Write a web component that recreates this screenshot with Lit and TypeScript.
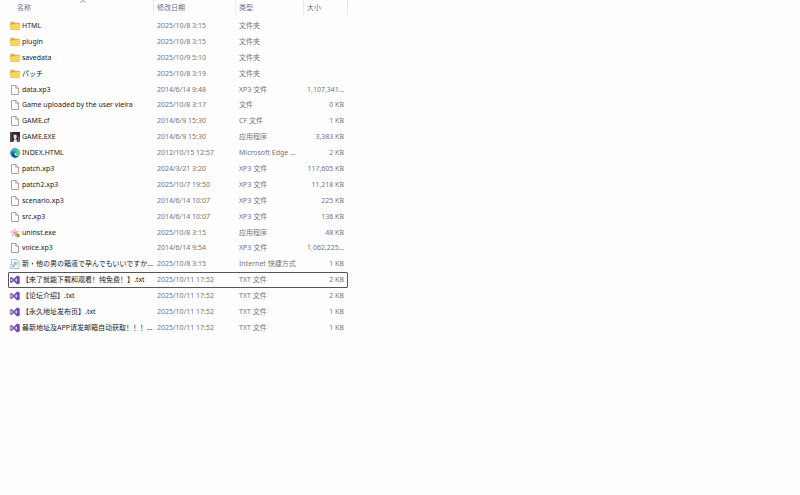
import { LitElement, html, svg, css } from "lit";
import { customElement, state } from "lit/decorators.js";

type Kind = "folder" | "file" | "game" | "edge" | "flower" | "shortcut" | "vs";

interface Entry {
  kind: Kind;
  name: string;
  date: string;
  type: string;
  size: string;
}

const e = (kind: Kind, name: string, date: string, type: string, size = ""): Entry => ({ kind, name, date, type, size });

const ENTRIES: Entry[] = [
  e("folder", "HTML", "2025/10/8 3:15", "文件夹"),
  e("folder", "plugin", "2025/10/8 3:15", "文件夹"),
  e("folder", "savedata", "2025/10/9 5:10", "文件夹"),
  e("folder", "パッチ", "2025/10/8 3:19", "文件夹"),
  e("file", "data.xp3", "2014/6/14 9:48", "XP3 文件", "1,107,341..."),
  e("file", "Game uploaded by the user vieira", "2025/10/8 3:17", "文件", "0 KB"),
  e("file", "GAME.cf", "2014/6/9 15:30", "CF 文件", "1 KB"),
  e("game", "GAME.EXE", "2014/6/9 15:30", "应用程序", "3,383 KB"),
  e("edge", "INDEX.HTML", "2012/10/15 12:57", "Microsoft Edge ...", "2 KB"),
  e("file", "patch.xp3", "2024/3/21 3:20", "XP3 文件", "117,605 KB"),
  e("file", "patch2.xp3", "2025/10/7 19:50", "XP3 文件", "11,218 KB"),
  e("file", "scenario.xp3", "2014/6/14 10:07", "XP3 文件", "225 KB"),
  e("file", "src.xp3", "2014/6/14 10:07", "XP3 文件", "136 KB"),
  e("flower", "uninst.exe", "2025/10/8 3:15", "应用程序", "48 KB"),
  e("file", "voice.xp3", "2014/6/14 9:54", "XP3 文件", "1,062,225..."),
  e("shortcut", "新・他の男の箱液で孕んでもいいですか...", "2025/10/8 3:15", "Internet 快捷方式", "1 KB"),
  e("vs", "【来了就能下载和观看！纯免费！】.txt", "2025/10/11 17:52", "TXT 文件", "2 KB"),
  e("vs", "【论坛介绍】.txt", "2025/10/11 17:52", "TXT 文件", "2 KB"),
  e("vs", "【永久地址发布页】.txt", "2025/10/11 17:52", "TXT 文件", "1 KB"),
  e("vs", "最新地址及APP请发邮箱自动获取！！！...", "2025/10/11 17:52", "TXT 文件", "1 KB"),
];

const ICONS = {
  folder: svg`
    <path d="M.2 1.500q0-.8.8-.8h2.600l1.200 1.100h4.200q.8 0 .8.8v5.600H.2z" fill="#e9a92c"/>
    <path d="M.2 3.600h3.600l1.100-.9h4.100q.8 0 .8.8v4.700q0 .8-.8.8H1q-.8 0-.8-.8z" fill="#fdd465"/>
    <path d="M.3 8.300q.1.700.8.700h7.800q.7 0 .8-.7z" fill="#f4c451"/>`,
  file: svg`
    <path d="M1.500 .5h4.300l2.700 2.600v6.400h-7z" fill="#fdfdfd" stroke="#8d8d8d" stroke-width=".8"/>
    <path d="M5.700 .6v2.600h2.700" fill="none" stroke="#8d8d8d" stroke-width=".7"/>`,
  game: svg`
    <rect x="0" y="0" width="10" height="10" fill="#2d2735"/>
    <path d="M0 0h3L1.600 4 2.400 10H0z" fill="#54475c"/>
    <path d="M3.400 3.200q1.600-1.400 3.400.2l-.3 2.800-1.200 1.200-1.500-1.200z" fill="#f3dcda"/>
    <path d="M3.200 10l1-2.700h2.200L7.600 10z" fill="#e8dfe8"/>
    <path d="M7.600 3.800l1.300 1.600L10 10H8.600z" fill="#8c7890"/>`,
  edge: svg`
    <circle cx="5" cy="5" r="4.700" fill="#1477cc"/>
    <path d="M.4 4.400C.8 1.800 2.700.3 5 .3c2.900 0 4.700 2 4.700 4.200 0 1.600-1.200 2.500-2.500 2.500-.9 0-1.500-.3-1.300-.7.7-1.600-.4-3-2.300-3C2 3.300.9 4 .4 4.400z" fill="#35bfb2"/>
    <path d="M5 .3c2.900 0 4.700 2 4.700 4.200 0 1.600-1.200 2.500-2.500 2.500-.9 0-1.500-.3-1.300-.7C6.900 4 6.500 1.800 5 .3z" fill="#58cf7c"/>
    <path d="M3.700 5.300c-.5 1.800 1.200 3.200 3.200 3.200.8 0 1.500-.3 2.100-.7C8.100 9 6.700 9.700 5.100 9.700 3 9.600 2 8 2.200 6.600c.1-.7.7-1.200 1.500-1.300z" fill="#0c4a94"/>
    <path d="M4.300 5q1-.5 1.700.4-.5 1.300.4 1.700 1.300.5 2.900-.3-.9 1.100-2.400 1.100Q4.600 7.700 4.300 5z" fill="#fff"/>`,
  flower: svg`
    <g fill="#f4b9cb">
      <ellipse cx="4.600" cy="2.300" rx="1.100" ry="2"/>
      <ellipse cx="7.100" cy="4" rx="2" ry="1.100" transform="rotate(-18 7.100 4)"/>
      <ellipse cx="2.200" cy="4" rx="2" ry="1.100" transform="rotate(18 2.200 4)"/>
      <ellipse cx="3.200" cy="6.700" rx="1.100" ry="2" transform="rotate(36 3.200 6.700)"/>
      <ellipse cx="6.100" cy="6.700" rx="1.100" ry="2" transform="rotate(-36 6.100 6.700)"/>
    </g>
    <circle cx="4.700" cy="4.800" r=".9" fill="#e3718f"/>
    <path d="M5.400 6.200l2-1 2.200 1.300v2L7.700 9.600 5.400 8.300z" fill="#6d9a50"/>
    <path d="M5.400 6.200l2.200 1.200v2.200L5.400 8.300z" fill="#e3bf47"/>`,
  shortcut: svg`
    <path d="M1.400 .5h5.200l2.400 2.200v6.800H1.400z" fill="#f6fafc" stroke="#93a0a9" stroke-width=".7"/>
    <circle cx="5.500" cy="4.400" r="2" fill="#a3d2e2"/>
    <path d="M4 4.600q1.600-.2 2.700-1.900" stroke="#5c9cc0" stroke-width=".6" fill="none"/>
    <rect x=".5" y="5.600" width="4" height="4" fill="#fff" stroke="#a6b4bf" stroke-width=".5"/>
    <path d="M1.500 8.700l2-2M2 6.600h1.600v1.600" stroke="#4d8ec8" stroke-width=".6" fill="none"/>`,
  vs: svg`
    <path fill-rule="evenodd" d="M7 .6v8.800L3.700 6.300 1.200 8.200.2 7.700V2.300l1-.5 2.500 1.900zM7 3.500L5.100 5 7 6.500zM1.300 3.700v2.600L2.600 5z" fill="#8159c4"/>
    <path d="M7 .5l2.700 1.100v6.800L7 9.500z" fill="#7448b6"/>`,
};

const HEADINGS = ["名称", "修改日期", "类型", "大小"];

@customElement("app-root")
export class AppRoot extends LitElement {
  @state() private focused = 16;

  static styles = css`
    :host {
      display: block;
      min-height: 100vh;
      background: #fefefe;
      color: #747474;
      font: 7px/14px "Noto Sans", "Noto Sans CJK SC", sans-serif;
    }
    .list {
      table-layout: fixed;
      width: 340px;
      height: 336px;
      margin-left: 8px;
      border-collapse: separate;
      border-spacing: 0;
    }
    .name-col { width: 146px; }
    .date-col { width: 82px; }
    .type-col { width: 68px; }
    .head th {
      position: relative;
      height: 18px;
      padding: 0;
      vertical-align: top;
      font-weight: 400;
    }
    .sort {
      display: block;
      width: 100%;
      height: 15px;
      padding: 0 0 0 3px;
      border: 0;
      border-right: 1px solid #e4eaee;
      background: none;
      color: #66728a;
      font: inherit;
      text-align: left;
    }
    .head th:first-child .sort { padding-left: 9px; }
    .caret {
      position: absolute;
      top: 0;
      left: 72px;
      width: 6px;
      height: 3px;
    }
    .row td {
      padding: 0 3px;
      line-height: 14px;
      vertical-align: middle;
      white-space: nowrap;
    }
    .row .name { padding: 0 0 0 2px; color: #222; }
    .row .size { padding-right: 4px; text-align: right; }
    .label { display: flex; align-items: center; gap: 2px; }
    .icon { flex: none; width: 10px; height: 10px; }
    .row.focused { outline: 1px solid #555; outline-offset: -1px; border-radius: 1px; }
  `;

  render() {
    return html`
      <table class="list">
        <colgroup>
          <col class="name-col" /><col class="date-col" /><col class="type-col" /><col />
        </colgroup>
        <thead>
          <tr class="head">
            ${HEADINGS.map(
              (h, i) => html`<th scope="col">
                <button class="sort" type="button">${h}</button>
                ${i === 0
                  ? html`<svg class="caret" viewBox="0 0 6 3" aria-hidden="true">
                      <path d="M.5 2.600L3 .4l2.500 2.200" fill="none" stroke="#777" stroke-width=".8" />
                    </svg>`
                  : null}
              </th>`
            )}
          </tr>
        </thead>
        <tbody>
          ${ENTRIES.map(
            (x, i) => html`<tr class="row ${i === this.focused ? "focused" : ""}" @click=${() => (this.focused = i)}>
              <td class="name">
                <div class="label">
                  <svg class="icon" viewBox="0 0 10 10" aria-hidden="true">${ICONS[x.kind]}</svg>
                  <span>${x.name}</span>
                </div>
              </td>
              <td>${x.date}</td>
              <td>${x.type}</td>
              <td class="size">${x.size}</td>
            </tr>`
          )}
        </tbody>
      </table>
    `;
  }
}
